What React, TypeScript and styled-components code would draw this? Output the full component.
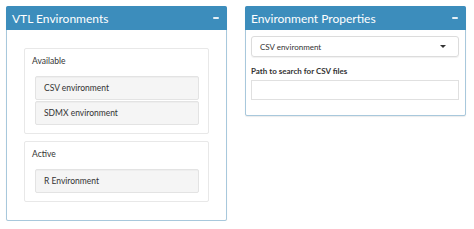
import styled, { createGlobalStyle } from "styled-components";

const GlobalStyle = createGlobalStyle`
  body {
    margin: 0;
    background: #ffffff;
    font-family: Lato, "Liberation Sans", sans-serif;
    color: #333333;
  }
`;

const Page = styled.div`
  display: flex;
  align-items: flex-start;
  gap: 18px;
  padding: 6px 8px 0 6px;
`;

const Box = styled.section<{ width: number }>`
  width: ${({ width }) => width}px;
  box-sizing: border-box;
  border: 1px solid #a8c8dc;
  border-radius: 2px;
  background: #ffffff;
  box-shadow: 0 1px 1px rgba(0, 0, 0, 0.08);
`;

const BoxHeader = styled.header`
  display: flex;
  align-items: center;
  justify-content: space-between;
  height: 24px;
  padding: 0 8px 0 6px;
  margin: -1px -1px 0;
  background: #3c8dbc;
  color: #ffffff;
  border-radius: 2px 2px 0 0;
`;

const BoxTitle = styled.h3`
  margin: 0;
  font-size: 12px;
  font-weight: 400;
`;

const Collapse = styled.span`
  display: block;
  width: 6px;
  height: 2px;
  background: #e6f0f6;
  border-radius: 1px;
`;

const BoxBody = styled.div<{ pad: string }>`
  padding: ${({ pad }) => pad};
  display: flex;
  flex-direction: column;
`;

const Well = styled.div`
  border: 1px solid #e8e8e8;
  border-radius: 2px;
  padding: 7px 9px 8px 10px;
  margin-bottom: 7px;
  &:last-child {
    margin-bottom: 0;
  }
`;

const WellLabel = styled.div`
  font-size: 8.5px;
  margin-bottom: 10px;
  margin-left: -3px;
`;

const Item = styled.div`
  height: 24px;
  box-sizing: border-box;
  display: flex;
  align-items: center;
  padding-left: 8px;
  background: #f5f5f5;
  border: 1px solid #e3e3e3;
  border-radius: 2px;
  font-size: 8.5px;
  box-shadow: inset 0 1px 1px rgba(0, 0, 0, 0.03);
  & + & {
    margin-top: 1px;
  }
`;

const Select = styled.div`
  height: 21px;
  box-sizing: border-box;
  display: flex;
  align-items: center;
  justify-content: space-between;
  padding: 0 12px 0 8px;
  border: 1px solid #dcdcdc;
  border-radius: 3px;
  font-size: 8px;
  box-shadow: 0 1px 1px rgba(0, 0, 0, 0.06);
`;

const Caret = styled.span`
  width: 0;
  height: 0;
  border-left: 3px solid transparent;
  border-right: 3px solid transparent;
  border-top: 3px solid #333333;
`;

const FieldLabel = styled.label`
  display: block;
  margin-top: 9px;
  margin-bottom: 4px;
  font-size: 8px;
  line-height: 10px;
  font-weight: 700;
`;

const TextInput = styled.div`
  height: 20px;
  box-sizing: border-box;
  border: 1px solid #e0e0e0;
`;

export default function App() {
  return (
    <>
      <GlobalStyle />
      <Page>
        <Box width={222}>
          <BoxHeader>
            <BoxTitle>VTL Environments</BoxTitle>
            <Collapse />
          </BoxHeader>
          <BoxBody pad="18px 17px 18px 17px">
            <Well>
              <WellLabel>Available</WellLabel>
              <Item>CSV environment</Item>
              <Item>SDMX environment</Item>
            </Well>
            <Well>
              <WellLabel>Active</WellLabel>
              <Item>R Environment</Item>
            </Well>
          </BoxBody>
        </Box>
        <Box width={222}>
          <BoxHeader>
            <BoxTitle>Environment Properties</BoxTitle>
            <Collapse />
          </BoxHeader>
          <BoxBody pad="6px 6px 15px 5px">
            <Select>
              CSV environment
              <Caret />
            </Select>
            <FieldLabel>Path to search for CSV files</FieldLabel>
            <TextInput />
          </BoxBody>
        </Box>
      </Page>
    </>
  );
}
